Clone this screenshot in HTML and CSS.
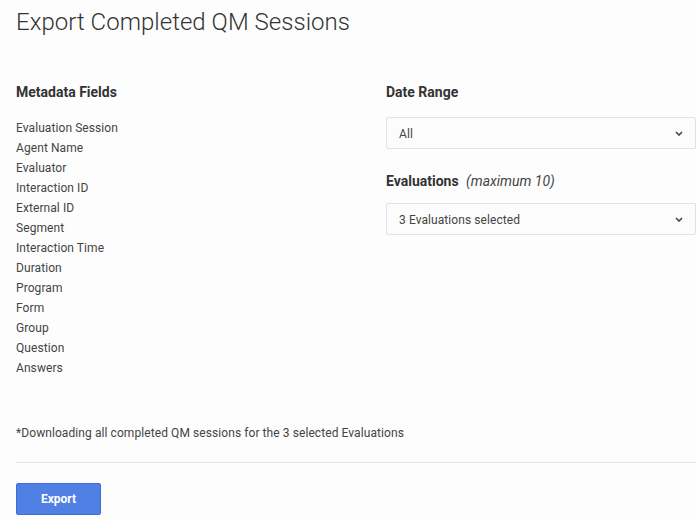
FILE: index.html
```html
<!DOCTYPE html>
<html>
<head>
<meta charset="utf-8">
<link rel="stylesheet" href="styles.css">
</head>
<body>
<div class="page">
  <h1 class="title">Export Completed QM Sessions</h1>
  <div class="columns">
    <div class="col-left">
      <h2 class="heading">Metadata Fields</h2>
      <ul class="fields">
        <li>Evaluation Session</li>
        <li>Agent Name</li>
        <li>Evaluator</li>
        <li>Interaction ID</li>
        <li>External ID</li>
        <li>Segment</li>
        <li>Interaction Time</li>
        <li>Duration</li>
        <li>Program</li>
        <li>Form</li>
        <li>Group</li>
        <li>Question</li>
        <li>Answers</li>
      </ul>
    </div>
    <div class="col-right">
      <h2 class="heading">Date Range</h2>
      <div class="select">
        <span>All</span>
        <svg class="chev" width="8" height="5" viewBox="0 0 8 5"><path d="M1 1 L4 4 L7 1" fill="none" stroke="#444" stroke-width="1.6"/></svg>
      </div>
      <h2 class="heading heading-2">Evaluations <em class="note">(maximum 10)</em></h2>
      <div class="select select-2">
        <span>3 Evaluations selected</span>
        <svg class="chev" width="8" height="5" viewBox="0 0 8 5"><path d="M1 1 L4 4 L7 1" fill="none" stroke="#444" stroke-width="1.6"/></svg>
      </div>
    </div>
  </div>
  <p class="footnote">*Downloading all completed QM sessions for the 3 selected Evaluations</p>
  <hr class="divider">
  <button class="btn">Export</button>
</div>
</body>
</html>
```

FILE: styles.css
```css
html, body {
  margin: 0;
  padding: 0;
  background: #fdfdfd;
}
body {
  font-family: Roboto, "Liberation Sans", sans-serif;
  color: #444;
}
.page {
  padding: 0 1px 0 16px;
}
.title {
  margin: 6px 0 0 0;
  font-size: 24px;
  line-height: 32px;
  font-weight: 300;
  color: #333;
  letter-spacing: 0.03px;
}
.columns {
  display: grid;
  grid-template-columns: 370px 1fr;
  margin-top: 44px;
}
.heading {
  margin: 0;
  font-size: 14px;
  line-height: 20px;
  font-weight: 700;
  color: #333;
}
.fields {
  list-style: none;
  margin: 16px 0 0 0;
  padding: 0;
  font-size: 12px;
  line-height: 20px;
  color: #444;
  letter-spacing: 0.08px;
}
.select {
  margin-top: 15px;
  height: 32px;
  box-sizing: border-box;
  border: 1px solid #dfe2e7;
  border-radius: 2px;
  background: #fcfcfc;
  display: flex;
  align-items: center;
  justify-content: space-between;
  padding: 1px 12px 0 12px;
  font-size: 12px;
  color: #444;
  letter-spacing: 0.08px;
}
.chev {
  display: block;
}
.heading-2 {
  margin-top: 22px;
}
.select-2 {
  margin-top: 12px;
}
.note {
  font-weight: 400;
  font-style: italic;
  margin-left: 4px;
  color: #444;
}
.footnote {
  margin: 45px 0 0 0;
  font-size: 12px;
  line-height: 20px;
  color: #444;
  letter-spacing: 0.08px;
}
.divider {
  margin: 19px 0 0 0;
  border: 0;
  border-top: 1px solid #e6e6e6;
  height: 0;
}
.btn {
  margin-top: 20px;
  width: 85px;
  height: 32px;
  background: #5080e4;
  border: 1px solid #3f6dd6;
  border-radius: 2px;
  color: #fff;
  font-family: Roboto, "Liberation Sans", sans-serif;
  font-size: 12px;
  font-weight: 700;
  padding: 0;
}
```
